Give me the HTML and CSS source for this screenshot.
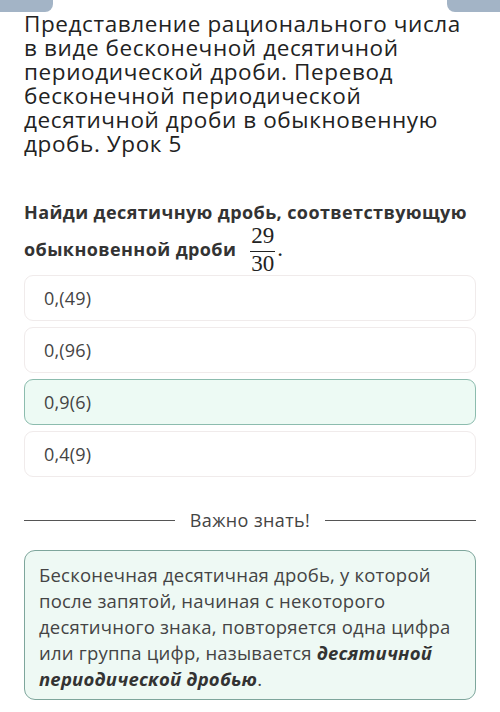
FILE: index.html
```html
<!DOCTYPE html>
<html lang="ru">
<head>
<meta charset="utf-8">
<link rel="stylesheet" href="styles.css">
</head>
<body>
<div class="topbar"><span class="tab tab-left"></span><span class="tab tab-right"></span></div>
<h1 class="title">Представление рационального числа в виде бесконечной десятичной периодической дроби. Перевод бесконечной периодической десятичной дроби в обыкновенную дробь. Урок 5</h1>
<p class="question">Найди десятичную дробь, соответствующую обыкновенной дроби <span class="frac"><span class="num">29</span><span class="den">30</span></span><span class="dot">.</span></p>
<div class="options">
  <div class="option">0,(49)</div>
  <div class="option">0,(96)</div>
  <div class="option option-selected">0,9(6)</div>
  <div class="option">0,4(9)</div>
</div>
<div class="divider"><span class="line"></span><span class="divider-text">Важно знать!</span><span class="line"></span></div>
<div class="info">Бесконечная десятичная дробь, у которой после запятой, начиная с некоторого десятичного знака, повторяется одна цифра или группа цифр, называется <b><i>десятичной периодической дробью</i></b>.</div>
</body>
</html>
```
FILE: styles.css
```css
html, body {
  margin: 0;
  padding: 0;
  background: #ffffff;
}
body {
  font-family: "Open Sans", "Noto Sans", sans-serif;
  color: #333;
  padding: 0 24px;
}
.topbar {
  display: flex;
  justify-content: space-between;
  height: 12px;
  margin: 0 -24px;
}
.tab {
  width: 53px;
  height: 12px;
  background: #a3b4c6;
}
.tab-left { border-bottom-right-radius: 8px; }
.tab-right { border-bottom-left-radius: 8px; }
.title {
  margin: 0;
  font-size: 22.5px;
  letter-spacing: 0.6px;
  line-height: 24px;
  font-weight: 400;
  color: #222;
}
.question {
  margin: 44px 0 0;
  font-size: 18px;
  letter-spacing: 0.4px;
  line-height: 24px;
  font-weight: 700;
  color: #333;
}
.frac {
  display: inline-flex;
  flex-direction: column;
  align-items: center;
  vertical-align: 12.5px;
  margin-left: 9px;
  font-family: "Liberation Serif", "Times New Roman", serif;
  font-weight: 400;
  font-size: 23px;
  letter-spacing: 0;
  line-height: 23px;
  color: #222;
}
.num {
  padding: 0 1px 4px;
  border-bottom: 1px solid #222;
}
.den {
  padding: 0 1px;
}
.dot {
  font-family: "Liberation Serif", serif;
  font-weight: 400;
  font-size: 23px;
  margin-left: 2px;
  color: #222;
}
.options {
  display: flex;
  flex-direction: column;
  gap: 6px;
}
.option {
  height: 46px;
  box-sizing: border-box;
  display: flex;
  align-items: center;
  padding: 0 19px;
  border: 1px solid #f0ebeb;
  border-radius: 9px;
  font-size: 18px;
  letter-spacing: 0.2px;
  color: #444;
  background: #fff;
}
.option-selected {
  background: #edfaf4;
  border: 1.5px solid #8cbcae;
}
.divider {
  display: flex;
  align-items: center;
  gap: 15px;
  margin-top: 31px;
}
.line {
  flex: 1;
  height: 1px;
  background: #555;
}
.divider-text {
  font-size: 18px;
  letter-spacing: 0.4px;
  line-height: 24px;
  color: #444;
}
.info {
  margin-top: 18px;
  padding: 11px 14px 7px;
  border: 1.5px solid #7ea69c;
  border-radius: 11px;
  background: #eef9f4;
  font-size: 18.5px;
  letter-spacing: 0.2px;
  line-height: 26px;
  color: #444;
}
.info b {
  color: #333;
}
```
